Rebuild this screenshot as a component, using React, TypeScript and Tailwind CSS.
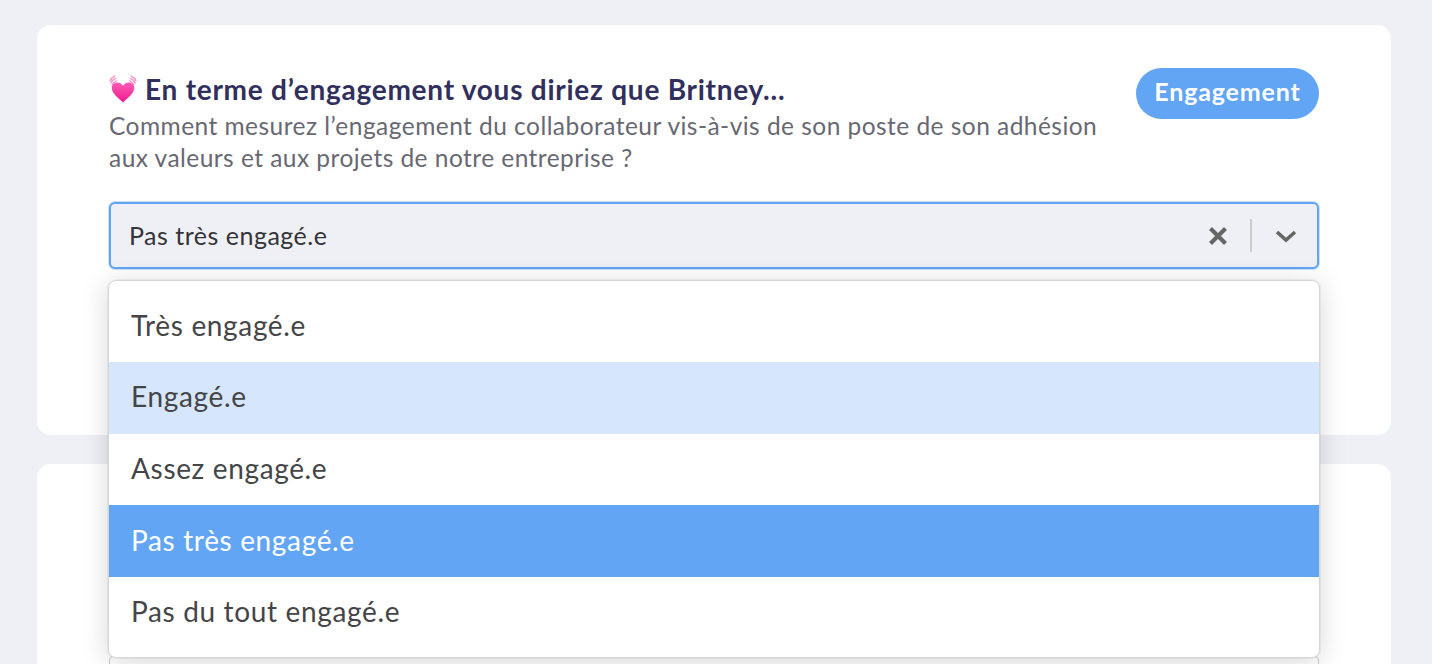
import * as React from 'react';

const OPTIONS = [
  { label: 'Très engagé.e', tone: 'bg-white text-[#454547]' },
  { label: 'Engagé.e', tone: 'bg-[#d6e6fc] text-[#454547]' },
  { label: 'Assez engagé.e', tone: 'bg-white text-[#454547]' },
  { label: 'Pas très engagé.e', tone: 'bg-[#62a5f5] text-white' },
  { label: 'Pas du tout engagé.e', tone: 'bg-white text-[#454547]' },
];

const font = { fontFamily: 'Lato, "Noto Sans", sans-serif' };

function BeatingHeart() {
  return (
    <svg viewBox="0 0 28 28" className="h-[28px] w-[28px] shrink-0">
      <defs>
        <linearGradient id="heart" x1="0" y1="0" x2="0" y2="1">
          <stop offset="0" stopColor="#ff5cb6" />
          <stop offset="1" stopColor="#ee1a8e" />
        </linearGradient>
      </defs>
      <path
        d="M14 27.500C8.500 22.500 2.800 18.500 2.800 12.800 2.800 9.600 5.200 7.500 8.200 7.500c2.500 0 4.500 1.200 5.800 3.300 1.300-2.100 3.300-3.300 5.800-3.300 3 0 5.400 2.100 5.400 5.300 0 5.700-5.700 9.700-11.200 14.700z"
        fill="url(#heart)"
      />
      <g fill="none" stroke="#f98ccc" strokeWidth="1.300" strokeLinecap="round">
        <path d="M1 5.800C2 3.600 3.500 2.200 5.800 1.200" />
        <path d="M1.800 8C2.800 5.800 4.300 4.400 6.600 3.400" />
        <path d="M3 10C3.800 8.200 5.100 6.800 7.200 5.800" />
        <path d="M27 5.800C26 3.600 24.500 2.200 22.200 1.200" />
        <path d="M26.200 8C25.200 5.800 23.700 4.400 21.400 3.400" />
        <path d="M25 10C24.200 8.200 22.900 6.800 20.800 5.800" />
      </g>
    </svg>
  );
}

function SelectControl() {
  return (
    <div className="flex h-[67px] items-center rounded-[6px] border-2 border-[#62a5f5] bg-[#eff0f5] pl-[18px] pr-[20px] shadow-[0_0_0_1px_rgba(98,165,245,0.35)]">
      <span className="flex-1 text-[25px] tracking-[0.5px] text-[#333338]">Pas très engagé.e</span>
      <svg viewBox="0 0 20 20" className="h-[20px] w-[20px] translate-x-[1px] text-[#666]">
        <path d="M2.500 2.500l15 15M17.500 2.500l-15 15" stroke="currentColor" strokeWidth="4.200" fill="none" />
      </svg>
      <div className="mx-[23px] h-[33px] w-[2px] bg-[#cbcbcb]" />
      <svg viewBox="0 0 22 14" className="h-[14px] w-[22px] text-[#666]">
        <path d="M2 3l9 8 9-8" stroke="currentColor" strokeWidth="3.600" fill="none" />
      </svg>
    </div>
  );
}

function OptionsMenu() {
  return (
    <div className="absolute left-[-1px] right-[-1px] top-[78px] z-10 overflow-hidden rounded-[8px] border border-[#d6d6d6] bg-white pb-[9px] pt-[9.500px] shadow-[0_0_0_1px_rgba(0,0,0,0.04),0_4px_28px_rgba(0,0,0,0.16)]">
      {OPTIONS.map((o) => (
        <div key={o.label} className={`flex h-[71.600px] items-center pb-[3px] pl-[22px] text-[28px] tracking-[0.65px] ${o.tone}`}>
          {o.label}
        </div>
      ))}
    </div>
  );
}

export default function App() {
  return (
    <div className="h-[664px] overflow-hidden bg-[#eff0f6] px-[37px] pt-[25px] pr-[41px]" style={font}>
      <section className="relative z-10 h-[410px] rounded-[14px] bg-white pl-[72px] pr-[72px] pt-[43px]">
        <div className="flex items-start justify-between">
          <div>
            <h2 className="flex h-[42px] items-center gap-[8px] text-[28px] font-bold tracking-[0.75px] text-[#312f5c]">
              <BeatingHeart />
              En terme d’engagement vous diriez que Britney...
            </h2>
            <p className="w-[1005px] text-[24.500px] leading-[32px] tracking-[0.46px] text-[#686873]">
              Comment mesurez l’engagement du collaborateur vis-à-vis de son poste de son adhésion aux valeurs et aux projets de notre entreprise ?
            </p>
          </div>
          <span className="flex h-[51px] w-[183px] items-center justify-center rounded-full bg-[#62a5f5] pb-[3px] text-[25px] font-bold tracking-[0.85px] text-white">
            Engagement
          </span>
        </div>
        <div className="relative mt-[28px]">
          <SelectControl />
          <OptionsMenu />
        </div>
      </section>
      <section className="mt-[29px] h-[300px] rounded-[14px] bg-white pl-[72px] pr-[72px] pt-[191px]">
        <div className="h-[66px] rounded-[6px] border border-[#c9c9c9] bg-white" />
      </section>
    </div>
  );
}
